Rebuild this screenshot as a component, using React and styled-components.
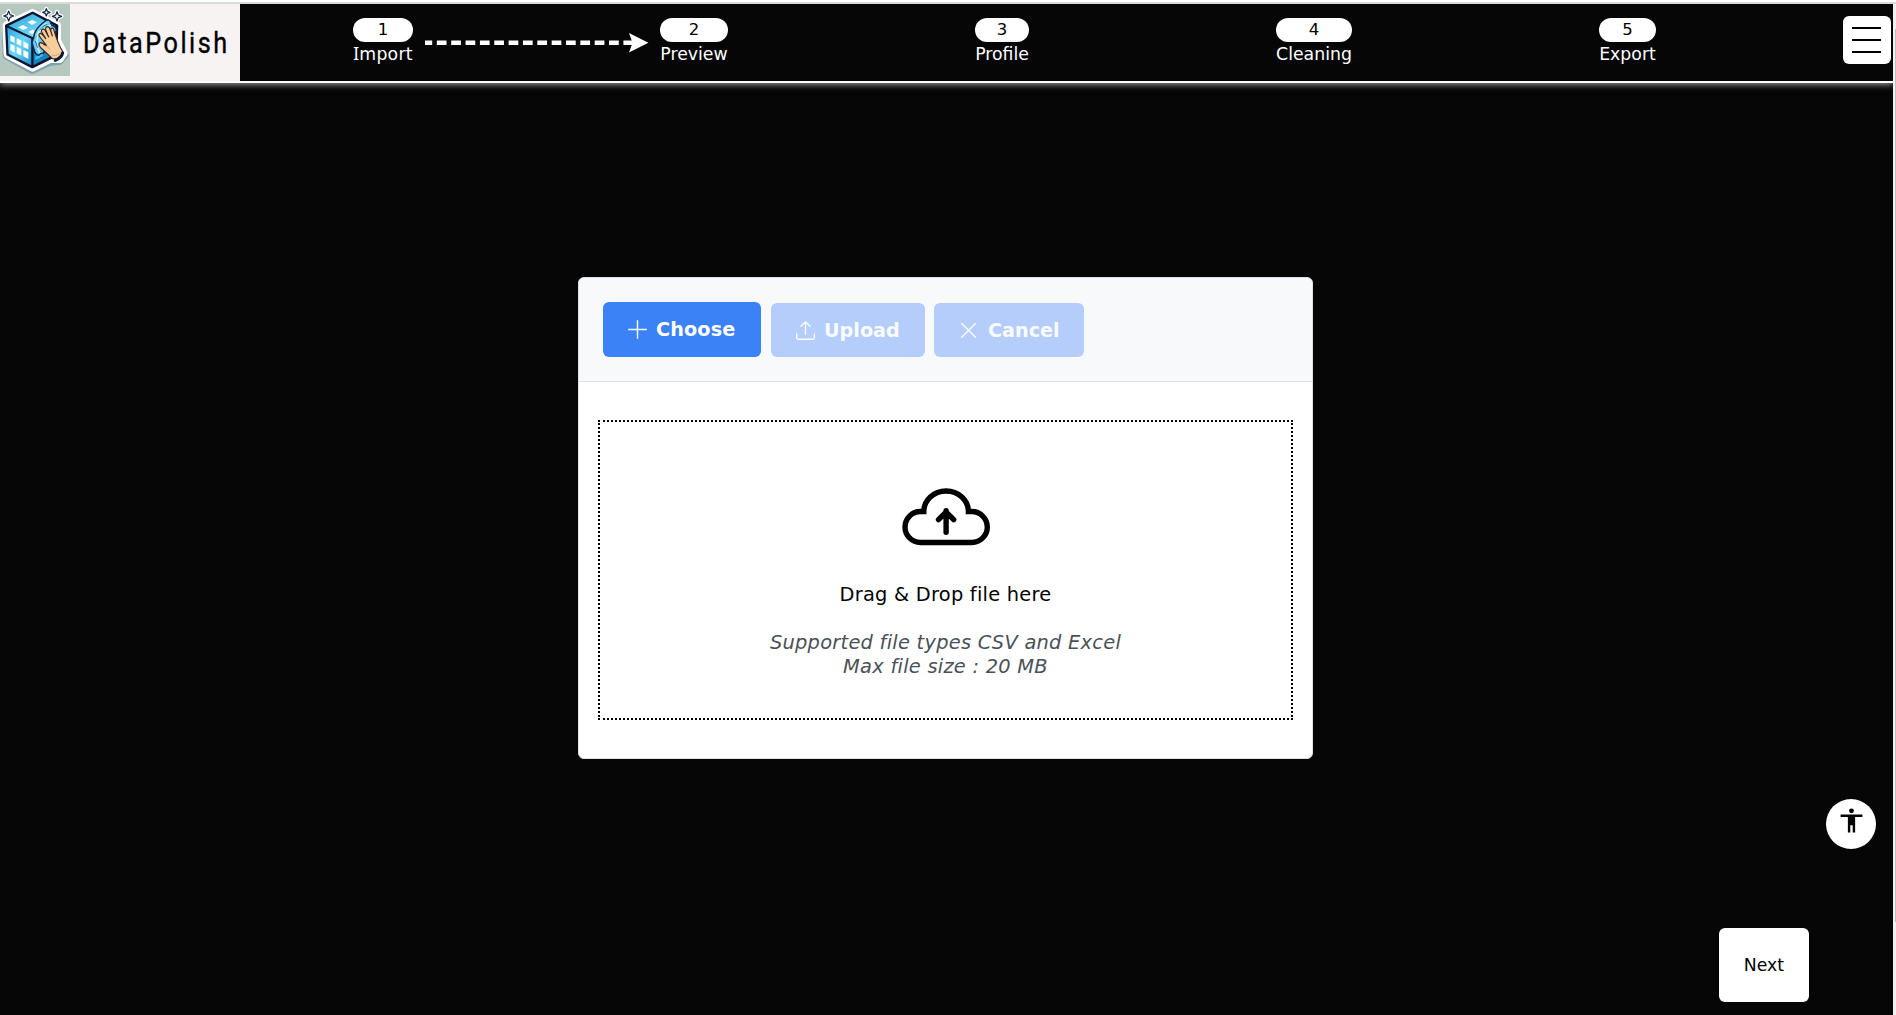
import React from "react";
import styled, { createGlobalStyle, css } from "styled-components";

const Global = createGlobalStyle`
  *, *::before, *::after { box-sizing: border-box; }
  body {
    margin: 0;
    overflow: hidden;
    background: #060606;
    font-family: "DejaVu Sans", Verdana, sans-serif;
    font-size: 17.3px;
    color: #000;
  }
  button { font: inherit; letter-spacing: inherit; border: 0; padding: 0; margin: 0; }
`;

const Page = styled.div`
  display: flex;
  flex-direction: column;
  height: 100vh;
`;

const TopStrip = styled.div`
  flex: 0 0 4px;
  background: #fff;
  border-bottom: 2px solid #dadada;
`;

const Viewport = styled.div`
  flex: 1;
  min-height: 0;
  display: flex;
`;

const Content = styled.div`
  flex: 1;
  display: flex;
  flex-direction: column;
  overflow: hidden;
`;

const ScrollTrack = styled.div`
  flex: 0 0 3px;
  background: #f1f1f1;
  padding: 25px 0 0 2px;
`;

const ScrollThumb = styled.div`
  height: 893px;
  background: #c1c1c1;
`;

const Header = styled.header`
  position: relative;
  flex: 0 0 79px;
  display: flex;
  background: #060606;
  border-bottom: 2px solid #fff;
  box-shadow: 0 1px 7px rgba(255, 255, 255, 0.7);
`;

const Brand = styled.div`
  width: 240px;
  display: flex;
  background: #f8f3f3;
`;

const BrandMark = styled.svg`
  display: block;
  flex: none;
`;

const BrandName = styled.span`
  margin-left: 12.5px;
  margin-top: 19px;
  font-family: Roboto, sans-serif;
  font-size: 30px;
  line-height: 40px;
  letter-spacing: 3px;
  white-space: nowrap;
  -webkit-text-stroke: 0.4px #000;
  transform: scaleX(0.84);
  transform-origin: 0 0;
`;

const Steps = styled.nav`
  flex: 1;
  display: flex;
  padding: 14px 0 0 113px;
`;

const Step = styled.div`
  flex: none;
  width: ${(p) => p.$width}px;
  display: flex;
  flex-direction: column;
  align-items: center;
`;

const StepNumber = styled.div`
  width: 100%;
  height: 24px;
  border-radius: 12px;
  background: #fff;
  text-align: center;
  font-size: 16.5px;
  line-height: 24px;
`;

const StepLabel = styled.div`
  height: 24px;
  line-height: 24px;
  color: #fff;
  white-space: nowrap;
  letter-spacing: ${(p) => p.$spacing || 0}px;
`;

const SerifI = styled.span`
  font-family: "Noto Sans", sans-serif;
  line-height: 1;
`;

const Connector = styled.div`
  flex: 0 0 247px;
  padding: 14px 0 0 12px;
`;

const MenuButton = styled.button`
  flex: none;
  width: 48px;
  height: 48px;
  margin: 12px 2px 0 0;
  padding-left: 9px;
  display: flex;
  flex-direction: column;
  justify-content: center;
  gap: 10px;
  border-radius: 6px;
  background: #fff;
`;

const MenuBar = styled.span`
  width: 29px;
  height: 2px;
  background: #000;
`;

const Main = styled.main`
  flex: 1;
  display: flex;
  align-items: flex-start;
  padding: 194px 0 0 578px;
`;

const Card = styled.section`
  width: 735px;
  height: 482px;
  display: flex;
  flex-direction: column;
  overflow: hidden;
  border: 1px solid #dee2e6;
  border-radius: 6px;
  background: #fff;
`;

const CardToolbar = styled.div`
  flex: 0 0 104px;
  display: flex;
  align-items: flex-end;
  padding: 0 0 24px 24px;
  background: #f8f9fb;
  border-bottom: 1px solid #dee2e6;
`;

const ActionButton = styled.button`
  display: flex;
  align-items: center;
  flex: none;
  width: ${(p) => p.$width}px;
  height: 54px;
  margin-right: ${(p) => p.$gap || 0}px;
  padding-left: 25px;
  gap: ${(p) => p.$iconGap}px;
  border-radius: 6px;
  background: #3b82f6;
  color: #fff;
  font-size: 19.2px;
  font-weight: 700;
  white-space: nowrap;
  letter-spacing: ${(p) => p.$spacing || 0}px;
  ${(p) =>
    p.$primary
      ? css`
          height: 55px;
          padding-bottom: 1px;
        `
      : css`
          background: #b4cdfa;
          color: #f9fbfe;
        `}
`;

const Glyph = styled.svg`
  flex: none;
  display: block;
  fill: none;
  stroke: currentColor;
  stroke-width: 1.4;
  stroke-linecap: round;
  stroke-linejoin: round;
`;

const DropZone = styled.div`
  width: 695px;
  height: 300px;
  margin: 38px 0 0 19px;
  display: flex;
  flex-direction: column;
  align-items: center;
  padding-top: 64px;
  border: 2px dotted #000;
  font-size: 19.4px;
  text-align: center;
`;

const DropTitle = styled.p`
  margin: 35px 0 0;
  line-height: 24px;
  letter-spacing: 0.24px;
`;

const DropHint = styled.p`
  margin: 24px 0 0;
  line-height: 24px;
  letter-spacing: 0.26px;
  font-style: italic;
  color: #495057;
`;

const AccessibilityButton = styled.button`
  position: fixed;
  right: 20px;
  top: 799px;
  width: 50px;
  height: 50px;
  border-radius: 50%;
  background: #fff;
  display: flex;
  justify-content: center;
  padding-top: 7px;
`;

const NextButton = styled.button`
  position: fixed;
  right: 87px;
  bottom: 13px;
  width: 90px;
  height: 74px;
  border-radius: 6px;
  background: #fff;
  color: #000;
`;

function Sparkle({ x, y, r }) {
  const k = r * 0.28;
  const d = `M${x} ${y - r}L${x + k} ${y - k}L${x + r} ${y}L${x + k} ${y + k}L${x} ${y + r}L${x - k} ${y + k}L${x - r} ${y}L${x - k} ${y - k}Z`;
  return (
    <>
      <path d={d} fill="#fff" stroke="#fff" strokeWidth="11" strokeLinejoin="round" />
      <path d={d} fill="#eef9fd" stroke="#14233f" strokeWidth="3.5" strokeLinejoin="round" />
    </>
  );
}

function Logo() {
  return (
    <BrandMark width="70" height="72" viewBox="0 12 210 216">
      <defs>
        <linearGradient id="top" x1="0" y1="0" x2="1" y2="1">
          <stop offset="0" stopColor="#24a5dd" />
          <stop offset="1" stopColor="#9be9fb" />
        </linearGradient>
        <linearGradient id="front" x1="0" y1="0" x2="1" y2="1">
          <stop offset="0" stopColor="#2aa7e0" />
          <stop offset="0.5" stopColor="#6fd5f5" />
          <stop offset="1" stopColor="#1f8fd0" />
        </linearGradient>
      </defs>
      <rect y="12" width="210" height="216" fill="#b5c7bf" />
      <path d="M98 34L18 74L20 164L98 208L150 184L182 180L198 162L174 122L174 76L145 60Z" fill="#7fa3ad" stroke="#7fa3ad" strokeWidth="20" strokeLinejoin="round" transform="translate(-2 4)" />
      <path d="M98 38L18 76L22 164L98 204L150 178L180 178L192 160L172 122L172 76L145 62Z" fill="#fff" stroke="#fff" strokeWidth="22" strokeLinejoin="round" />
      <Sparkle x={26} y={48} r={15} />
      <Sparkle x={139} y={37} r={11} />
      <Sparkle x={171} y={49} r={14} />
      <path d="M98 39L19 77L23 163L97 201L168 166L171 77Z" fill="#10375e" stroke="#0a1530" strokeWidth="8" strokeLinejoin="round" />
      <path d="M98 42L25 78L97 112L165 78Z" fill="url(#top)" />
      <path d="M22 83L94 116L94 196L26 161Z" fill="url(#front)" />
      <path d="M101 117L166 84L164 163L101 195Z" fill="#1684bd" />
      <g fill="#f4fdff">
        <path d="M82 67L97 60L111 67L96 75Z" />
        <path d="M54 82L69 75L84 83L69 90Z" />
        <path d="M85 96L98 89L108 96L97 103Z" />
        <path d="M31 106L44 112V129L31 123Z" />
        <path d="M50 115L64 121V138L50 132Z" />
        <path d="M70 124L85 131V148L70 141Z" />
        <path d="M31 131L44 137V158L31 151Z" />
        <path d="M50 140L64 147V167L50 160Z" />
        <path d="M70 150L85 157V177L70 169Z" />
        <path d="M106 170L128 159V168L106 180Z" fill="#43c0ea" />
      </g>
      <path d="M19 77L97 114L97 200M97 114L113 106" fill="none" stroke="#0a1530" strokeWidth="5" strokeLinejoin="round" />
      <path d="M132 66Q143 55 151 64L154 76Q169 78 169 93L153 112L133 125L132 159Q122 158 116 166Q104 161 103 151Q99 139 96 127Q102 114 104 99Q111 82 132 66Z" fill="#69c9f0" stroke="#0c2a55" strokeWidth="4.5" strokeLinejoin="round" />
      <path d="M138 70Q116 85 112 106M124 86Q115 97 111 119Q109 139 119 157M151 76Q138 79 132 89" fill="none" stroke="#bdf0ff" strokeWidth="5" strokeLinecap="round" />
      <path d="M141 73Q128 76 118 91M106 123L113 143" fill="none" stroke="#1b71b4" strokeWidth="3" />
      <path d="M120 111Q114 105 119 101Q124 98 130 107L137 116L125 96Q123 87 130 87Q135 88 138 96L146 111L137 89Q136 80 143 80Q148 80 151 90L157 108L152 91Q153 82 160 85L169 113Q174 128 181 142Q189 151 188 161L175 178L157 176L144 163L123 144Q114 134 119 129Q123 125 133 134L139 136Z" fill="#f5ce9c" stroke="#3c241b" strokeWidth="3.5" strokeLinejoin="round" />
      <path d="M137 139Q146 139 149 149M155 165Q169 171 178 161" fill="none" stroke="#dd9e70" strokeWidth="3" />
      <path d="M188 158Q186 172 166 181" fill="none" stroke="#0c1835" strokeWidth="9" strokeLinecap="round" />
    </BrandMark>
  );
}

function DashedArrow() {
  return (
    <svg width="224" height="22" viewBox="0 0 224 22" style={{ display: "block" }}>
      <path d="M0 10.7H208" stroke="#fff" strokeWidth="4.6" strokeDasharray="9.7 4.65" strokeDashoffset="2.5" />
      <path d="M204 1L223.4 10.7L204 20.4L207.5 10.7Z" fill="#fff" />
    </svg>
  );
}

const steps = [
  { width: 60, label: "Import", spacing: 0.25 },
  { width: 68, label: "Preview" },
  { width: 54, label: "Profile" },
  { width: 76, label: "Cleaning" },
  { width: 57, label: "Export" },
];

export default function App() {
  return (
    <Page>
      <Global />
      <TopStrip />
      <Viewport>
        <Content>
          <Header>
            <Brand>
              <Logo />
              <BrandName>DataPolish</BrandName>
            </Brand>
            <Steps>
              {steps.map((s, i) => (
                <React.Fragment key={s.label}>
                  {i > 0 && <Connector>{i === 1 && <DashedArrow />}</Connector>}
                  <Step $width={s.width}>
                    <StepNumber>{i + 1}</StepNumber>
                    <StepLabel $spacing={s.spacing}>
                      {s.label[0] === "I" ? (
                        <>
                          <SerifI>I</SerifI>
                          {s.label.slice(1)}
                        </>
                      ) : (
                        s.label
                      )}
                    </StepLabel>
                  </Step>
                </React.Fragment>
              ))}
            </Steps>
            <MenuButton aria-label="Menu">
              <MenuBar />
              <MenuBar />
              <MenuBar />
            </MenuButton>
          </Header>
          <Main>
            <Card>
              <CardToolbar>
                <ActionButton $primary $width={158} $gap={10} $iconGap={9} $spacing={0.15}>
                  <Glyph width="19" height="19" viewBox="0 0 19 19">
                    <path d="M9.5 0.7V18.3M0.7 9.5H18.3" />
                  </Glyph>
                  Choose
                </ActionButton>
                <ActionButton $width={154} $gap={9} $iconGap={9}>
                  <Glyph width="19" height="19" viewBox="0 0 19 19">
                    <path d="M9.5 13.2V0.9M5 5.2L9.5 0.8L14 5.2M0.7 13V16.8Q0.7 18.2 2.1 18.2H16.9Q18.3 18.2 18.3 16.8V13" />
                  </Glyph>
                  Upload
                </ActionButton>
                <ActionButton $width={150} $iconGap={10}>
                  <Glyph width="19" height="19" viewBox="0 0 19 19">
                    <path d="M2.7 2.5L16.5 16.3M16.5 2.5L2.7 16.3" />
                  </Glyph>
                  Cancel
                </ActionButton>
              </CardToolbar>
              <DropZone>
                <svg width="92" height="62" viewBox="-0.5 0 92 62" fill="none" stroke="#000" strokeWidth="5.4">
                  <path d="M20 56.5A15.5 15.5 0 0 1 20 25.5H23.3A22.3 20.5 0 0 1 67.9 25.5H71.3A15.5 15.5 0 0 1 71.3 56.5Z" />
                  <path d="M45.6 46.2V24.6M38 33.6L45.6 26L53.2 33.6" strokeLinecap="round" />
                </svg>
                <DropTitle>Drag &amp; Drop file here</DropTitle>
                <DropHint>
                  Supported file types CSV and Excel
                  <br />
                  Max file size : 20 MB
                </DropHint>
              </DropZone>
            </Card>
          </Main>
        </Content>
        <ScrollTrack>
          <ScrollThumb />
        </ScrollTrack>
      </Viewport>
      <AccessibilityButton aria-label="Accessibility">
        <svg width="29" height="29" viewBox="0 0 24 24">
          <circle cx="12" cy="4" r="2" />
          <path d="M21 9h-6v13h-2v-6h-2v6H9V9H3V7h18z" />
        </svg>
      </AccessibilityButton>
      <NextButton>Next</NextButton>
    </Page>
  );
}
